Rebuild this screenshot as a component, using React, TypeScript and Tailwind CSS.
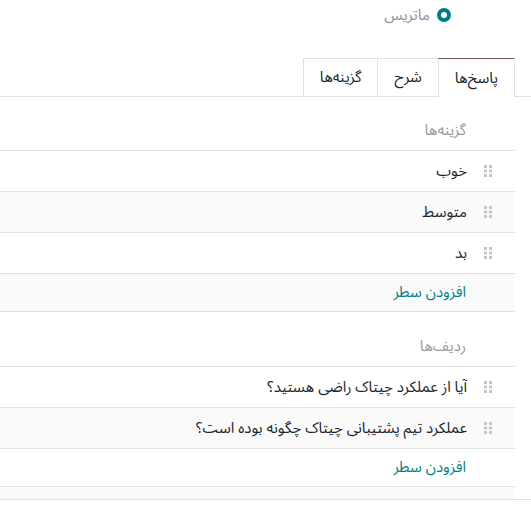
import React from 'react';

const font = { fontFamily: '"Noto Sans Arabic", "Noto Naskh Arabic", Roboto, "DejaVu Sans", sans-serif' };

const DragHandle = () => (
  <svg width="8" height="12" viewBox="0 0 8 12" className="shrink-0 text-[#c3c7cb]" fill="currentColor">
    <rect x="0" y="0" width="3" height="3" />
    <rect x="5" y="0" width="3" height="3" />
    <rect x="0" y="4.5" width="3" height="3" />
    <rect x="5" y="4.5" width="3" height="3" />
    <rect x="0" y="9" width="3" height="3" />
    <rect x="5" y="9" width="3" height="3" />
  </svg>
);

const HeaderRow = ({ label }: { label: string }) => (
  <div className="flex h-[41px] items-center border-b border-[#dee2e6] pr-[49px] text-[15px] text-[#999]">
    {label}
  </div>
);

const ItemRow = ({ label, striped }: { label: string; striped?: boolean }) => (
  <div
    className={`flex h-[41px] items-center gap-[17px] border-b border-[#dee2e6] pr-[23px] text-[15px] text-[#212529] ${
      striped ? 'bg-[#fafafa]' : 'bg-white'
    }`}
  >
    <DragHandle />
    <span>{label}</span>
  </div>
);

const AddRow = ({ striped }: { striped?: boolean }) => (
  <div
    className={`flex h-[38px] items-center border-b border-[#dee2e6] pr-[49px] text-[15px] text-[#017e84] ${
      striped ? 'bg-[#fafafa]' : 'bg-white'
    }`}
  >
    افزودن سطر
  </div>
);

export default function App() {
  const tabs = ['پاسخ‌ها', 'شرح', 'گزینه‌ها'];

  return (
    <div dir="rtl" className="min-h-screen w-full bg-white" style={font}>
      {/* گزینه ماتریس */}
      <div className="flex items-center gap-[7px] pr-[80px] pt-[8px]">
        <span className="flex h-[14px] w-[14px] items-center justify-center rounded-full bg-[#017e84]">
          <span className="h-[6px] w-[6px] rounded-full bg-white" />
        </span>
        <span className="text-[15px] leading-[14px] text-[#8f8f8f]">ماتریس</span>
      </div>

      {/* تب‌ها */}
      <div className="mt-[36px] flex border-b border-[#dee2e6] pr-[16px]">
        {tabs.map((t, i) => (
          <div
            key={t}
            className={[
              'flex h-[38px] items-center px-[16px] text-[15px] text-[#212529]',
              i === 0
                ? '-mb-px h-[39px] border-x border-t border-x-[#dee2e6] border-t-[#714b67] bg-white'
                : 'border-l border-t border-[#dee2e6]',
            ].join(' ')}
          >
            {t}
          </div>
        ))}
      </div>

      {/* جدول گزینه‌ها */}
      <div className="mr-[16px] mt-[13px]">
        <HeaderRow label="گزینه‌ها" />
        <ItemRow label="خوب" />
        <ItemRow label="متوسط" striped />
        <ItemRow label="بد" />
        <AddRow striped />
      </div>

      {/* جدول ردیف‌ها */}
      <div className="mt-[14px] border-b border-[#dee2e6]">
        <div className="mr-[16px]">
          <HeaderRow label="ردیف‌ها" />
          <ItemRow label="آیا از عملکرد چیتاک راضی هستید؟" />
          <ItemRow label="عملکرد تیم پشتیبانی چیتاک چگونه بوده است؟" striped />
          <AddRow />
          <div className="h-[12px] bg-[#fafafa]" />
        </div>
      </div>
    </div>
  );
}
